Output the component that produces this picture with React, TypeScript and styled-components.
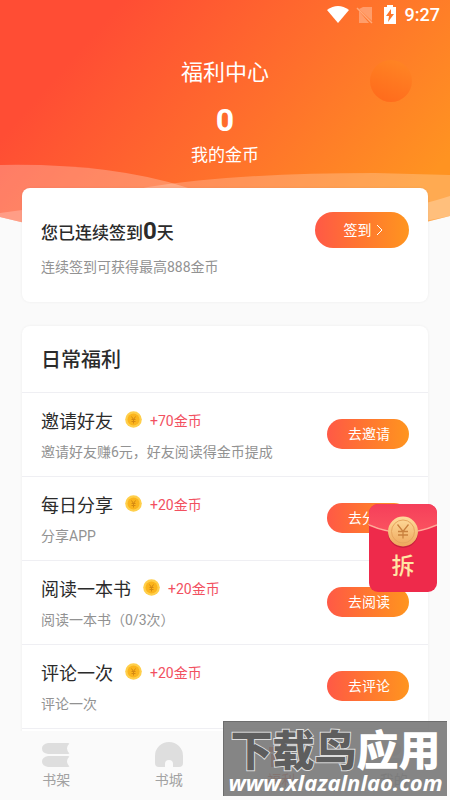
import React from "react";
import styled, { createGlobalStyle } from "styled-components";

const GlobalStyle = createGlobalStyle`
  *, *::before, *::after { box-sizing: border-box; }
  body {
    margin: 0;
    background: #fafafa;
    color: #2b2b2b;
    font-family: Roboto, "Noto Sans CJK SC", sans-serif;
  }
  button { font-family: inherit; }
  h1, h2, h3, p, ul { margin: 0; padding: 0; }
`;

const Screen = styled.div`
  position: relative;
  display: flex;
  flex-direction: column;
  height: 100vh;
  overflow: hidden;
`;

const Backdrop = styled.svg`
  position: absolute;
  top: 0;
  left: 0;
  width: 100%;
  height: 226px;
`;

const StatusBar = styled.div`
  position: relative;
  display: flex;
  align-items: center;
  justify-content: flex-end;
  height: 30px;
  padding-right: 10px;
  color: #fff;
  font-size: 18px;
  font-weight: 500;
  line-height: 30px;
`;

const StatusIcons = styled.svg`
  width: 72px;
  height: 20px;
  margin-right: 6px;
`;

const Main = styled.main`
  position: relative;
  flex: 1;
  min-height: 0;
  overflow: hidden;
`;

const Summary = styled.header`
  display: flex;
  flex-direction: column;
  align-items: center;
  height: 158px;
  padding-top: 27px;
  color: #fff;
`;

const PageTitle = styled.h1`
  font-size: 22px;
  font-weight: 400;
  line-height: 32px;
`;

const Balance = styled.strong`
  margin-top: 12px;
  font-size: 32px;
  font-weight: 700;
  line-height: 38px;
`;

const BalanceLabel = styled.p`
  margin-top: 3px;
  font-size: 17px;
  line-height: 26px;
`;

const Card = styled.section`
  margin: 0 22px 24px;
  border-radius: 8px;
  background: #fff;
  box-shadow: 0 0 3px rgba(0, 0, 0, 0.06);
`;

const CheckInCard = styled(Card)`
  display: flex;
  align-items: flex-start;
  justify-content: space-between;
  height: 114px;
  padding: 24px 19px 0;
`;

const TaskCard = styled(Card)`
  padding-bottom: 24px;
`;

const Streak = styled.h2`
  padding-top: 1px;
  font-size: 17px;
  font-weight: 500;
  line-height: 36px;
`;

const Days = styled.span`
  font-size: 24px;
  font-weight: 700;
  line-height: 36px;
`;

const Note = styled.p`
  color: #929292;
  font-size: 14px;
  line-height: 20px;
`;

const CheckInNote = styled(Note)`
  margin-top: 6px;
`;

const Pill = styled.button<{ $large?: boolean }>`
  display: flex;
  flex: none;
  align-items: center;
  justify-content: center;
  gap: 4px;
  width: ${(p) => (p.$large ? "94px" : "82px")};
  height: ${(p) => (p.$large ? "36px" : "30px")};
  padding: 0 0 0 2px;
  border: 0;
  border-radius: 18px;
  background: linear-gradient(90deg, #ff5946, #ff7431 45%, #ff951f);
  color: #fff;
  font-size: 14px;
  line-height: 20px;
`;

const CardTitle = styled.h2`
  height: 66px;
  padding: 0 19px;
  font-size: 20px;
  font-weight: 500;
  line-height: 68px;
`;

const TaskList = styled.ul`
  list-style: none;
  border-bottom: 1px solid #efeff3;
`;

const Task = styled.li`
  display: flex;
  align-items: center;
  justify-content: space-between;
  height: 84px;
  padding: 0 19px 2px;
  border-top: 1px solid #efeff3;
`;

const TaskHead = styled.div`
  display: flex;
  align-items: center;
  height: 30px;
  margin-bottom: 6px;
  padding-top: 2px;
`;

const TaskName = styled.h3`
  font-size: 18px;
  font-weight: 400;
  line-height: 28px;
`;

const Coin = styled.svg`
  width: 17px;
  height: 17px;
  margin: 0 8px 4px 12px;
`;

const Reward = styled.span`
  padding-bottom: 2px;
  color: #f2505f;
  font-size: 14px;
  line-height: 20px;
`;

const Nav = styled.nav`
  position: relative;
  display: flex;
  height: 69px;
  background: #fafafa;
`;

const Tab = styled.a<{ $active?: boolean }>`
  display: flex;
  flex: 1;
  flex-direction: column;
  align-items: center;
  padding-top: 11px;
  color: ${(p) => (p.$active ? "#f0502f" : "#a2a2a2")};
  font-size: 14px;
  line-height: 20px;
  text-decoration: none;
`;

const TabIcon = styled.svg<{ $active?: boolean }>`
  width: 28px;
  height: 28px;
  fill: ${(p) => (p.$active ? "#f0502f" : "#dedede")};
`;

const RedPacket = styled.button`
  position: absolute;
  right: 13px;
  bottom: 208px;
  display: flex;
  align-items: flex-end;
  justify-content: center;
  width: 68px;
  height: 88px;
  padding: 0 0 8px;
  border: 0;
  border-radius: 9px;
  overflow: hidden;
  background: #ee2a4b;
  color: #ffe6a5;
  font-size: 23px;
  font-weight: 500;
  line-height: 34px;
`;

const PacketArt = styled.svg`
  position: absolute;
  inset: 0;
  width: 68px;
  height: 88px;
`;

const PacketLabel = styled.span`
  position: relative;
`;

const Watermark = styled.div`
  position: absolute;
  right: 3px;
  bottom: 4px;
  display: flex;
  flex-direction: column;
  align-items: center;
  width: 224px;
  height: 75px;
  border: 1px solid #6d6d6d;
  border-width: 1px 0 0 1px;
  background: rgba(120, 120, 120, 0.9);
  color: #fff;
  white-space: nowrap;
`;

const Brand = styled.span`
  height: 50px;
  font-size: 42px;
  font-weight: 900;
  line-height: 60px;
`;

const BrandDark = styled.span`
  color: #5e5e5e;
  -webkit-text-stroke: 2px #dcdcdc;
  paint-order: stroke fill;
`;

const Site = styled.span`
  font-family: "Noto Sans", sans-serif;
  font-size: 22px;
  font-style: italic;
  font-weight: 700;
  line-height: 20px;
`;

const tasks = [
  { name: "邀请好友", reward: "+70金币", note: "邀请好友赚6元，好友阅读得金币提成", action: "去邀请" },
  { name: "每日分享", reward: "+20金币", note: "分享APP", action: "去分享" },
  { name: "阅读一本书", reward: "+20金币", note: "阅读一本书（0/3次）", action: "去阅读" },
  { name: "评论一次", reward: "+20金币", note: "评论一次", action: "去评论" },
];

const tabs = [
  {
    label: "书架",
    icon: <path d="M6 1h20q2 0 1 1-4 4 0 9 1 1-1 1H6Q0 11 0 6.500T6 1ZM6 14h20q2 0 1 1-4 4 0 9 1 1-1 1H6Q0 24 0 19.500T6 14Z" />,
  },
  {
    label: "书城",
    icon: <path d="M0 14a14 14 0 0 1 28 0v7q0 4-4 4h-6v-3a4 4 0 0 0-8 0v3H4q-4 0-4-4Z" />,
  },
  {
    label: "福利",
    active: true,
    icon: <path d="M2 5h24v5H2zM4 12h9v13H4zM15 12h9v13h-9zM8 0l6 4 6-4 2 4H6z" />,
  },
  {
    label: "我的",
    icon: <path d="M14 0a7 7 0 1 1 0 14 7 7 0 0 1 0-14ZM1 25q0-9 9-9h8q9 0 9 9Z" />,
  },
];

function HeroBackdrop() {
  return (
    <Backdrop viewBox="0 0 450 226" preserveAspectRatio="none" aria-hidden="true">
      <defs>
        <linearGradient id="hero" gradientUnits="userSpaceOnUse" x1="70" y1="60" x2="330" y2="290">
          <stop offset="0" stopColor="#ff4d34" />
          <stop offset="0.5" stopColor="#ff6f2c" />
          <stop offset="1" stopColor="#ff9321" />
        </linearGradient>
        <linearGradient id="ball" x1="0.3" y1="1" x2="0.7" y2="0">
          <stop offset="0" stopColor="#ff6b1c" />
          <stop offset="1" stopColor="#ff8424" />
        </linearGradient>
      </defs>
      <path fill="url(#hero)" d="M0 0H450V216Q340 245 225 245Q90 240 0 217Z" />
      <circle cx="391" cy="81" r="21" fill="url(#ball)" />
      <path fill="#fff" fillOpacity="0.25" d="M0 165Q110 163 185 187L225 200V245Q90 240 0 217Z" />
      <path fill="#fff" fillOpacity="0.22" d="M0 213Q80 203 148 187Q235 173 375 173L450 175V216Q340 245 225 245Q90 240 0 217Z" />
      <path fill="#fff" fillOpacity="0.25" d="M450 196Q400 212 330 222V240L450 216Z" />
    </Backdrop>
  );
}

function CoinIcon() {
  return (
    <Coin viewBox="0 0 17 17" aria-hidden="true">
      <circle cx="8.500" cy="8.500" r="8.300" fill="#ffcf4b" />
      <circle cx="8.500" cy="8.500" r="6" fill="#fbb41c" />
      <path d="M6.500 5.500l2 3 2-3M6.500 8.500h4M6.500 10.500h4M8.500 8.500v4" fill="none" stroke="#d58a12" />
    </Coin>
  );
}

export default function App() {
  return (
    <>
      <GlobalStyle />
      <Screen>
        <HeroBackdrop />
        <StatusBar>
          <StatusIcons viewBox="0 0 72 20" aria-hidden="true">
            <path fill="#fff" d="M0 5Q11-3 22 5L11 18Z" />
            <path fill="#fff" fillOpacity="0.3" d="M36 2h9v14L32 4Zm-4 4 10 12H32Z" />
            <path stroke="#ffc19b" strokeOpacity="0.7" strokeWidth="1.500" d="M30 3l15 15" />
            <path fill="#fff" fillRule="evenodd" d="M57 2h3V0h6v2h3v17H57ZM64 4l-5 7h3l-1 6 6-8h-3Z" />
          </StatusIcons>
          <span>9:27</span>
        </StatusBar>
        <Main>
          <Summary>
            <PageTitle>福利中心</PageTitle>
            <Balance>0</Balance>
            <BalanceLabel>我的金币</BalanceLabel>
          </Summary>
          <CheckInCard>
            <div>
              <Streak>
                您已连续签到<Days>0</Days>天
              </Streak>
              <CheckInNote>连续签到可获得最高888金币</CheckInNote>
            </div>
            <Pill type="button" $large>
              签到
              <svg width="7" height="12" viewBox="0 0 7 12" aria-hidden="true">
                <path d="M1 1l5 5-5 5" fill="none" stroke="#fff" />
              </svg>
            </Pill>
          </CheckInCard>
          <TaskCard>
            <CardTitle>日常福利</CardTitle>
            <TaskList>
              {tasks.map((task) => (
                <Task key={task.name}>
                  <div>
                    <TaskHead>
                      <TaskName>{task.name}</TaskName>
                      <CoinIcon />
                      <Reward>{task.reward}</Reward>
                    </TaskHead>
                    <Note>{task.note}</Note>
                  </div>
                  <Pill type="button">{task.action}</Pill>
                </Task>
              ))}
            </TaskList>
          </TaskCard>
        </Main>
        <Nav>
          {tabs.map((tab) => (
            <Tab key={tab.label} href="#" $active={tab.active}>
              <TabIcon viewBox="0 0 28 28" $active={tab.active} aria-hidden="true">
                {tab.icon}
              </TabIcon>
              {tab.label}
            </Tab>
          ))}
        </Nav>
        <RedPacket type="button">
          <PacketArt viewBox="0 0 68 88" aria-hidden="true">
            <defs>
              <linearGradient id="flap" x1="0" y1="0" x2="0" y2="1">
                <stop offset="0" stopColor="#f53f5a" />
                <stop offset="1" stopColor="#fb5360" />
              </linearGradient>
              <linearGradient id="gold" x1="0" y1="0" x2="0" y2="1">
                <stop offset="0" stopColor="#ffdc9c" />
                <stop offset="1" stopColor="#eea75c" />
              </linearGradient>
            </defs>
            <path d="M0 0h68v21Q34 36 0 21Z" fill="url(#flap)" />
            <path d="M0 21Q34 36 68 21" fill="none" stroke="#ffab99" strokeWidth="1.500" />
            <circle cx="34" cy="29" r="15" fill="#c91f3d" />
            <circle cx="34" cy="27.500" r="15" fill="url(#gold)" />
            <circle cx="34" cy="27.500" r="11.500" fill="none" stroke="#e7a55f" />
            <path d="M28.500 20.500l5.500 7 5.500-7M29 27.500h10M29 31h10M34 27.500v7" fill="none" stroke="#c9813e" strokeWidth="1.300" />
          </PacketArt>
          <PacketLabel>拆</PacketLabel>
        </RedPacket>
        <Watermark>
          <Brand>
            <BrandDark>下载鸟</BrandDark>应用
          </Brand>
          <Site>www.xlazalnlao.com</Site>
        </Watermark>
      </Screen>
    </>
  );
}
